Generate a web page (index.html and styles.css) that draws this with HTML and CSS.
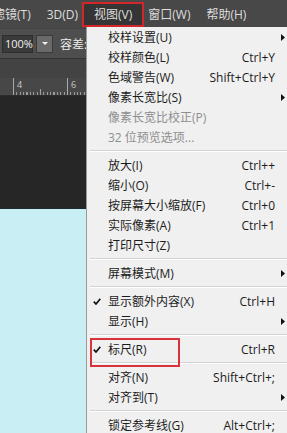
FILE: index.html
```html
<!DOCTYPE html>
<html lang="zh-CN">
<head>
<meta charset="utf-8">
<title>视图菜单</title>
<link rel="stylesheet" href="styles.css">
</head>
<body>
<div class="screen">
  <div class="menubar">
    <span class="mb-item first">滤镜(T)</span>
    <span class="mb-item">3D(D)</span>
    <span class="mb-item active">视图(V)</span>
    <span class="mb-item">窗口(W)</span>
    <span class="mb-item">帮助(H)</span>
  </div>
  <div class="optbar">
    <div class="zoomfield">100%</div>
    <div class="ddbtn"><svg width="6" height="3" viewBox="0 0 6 3"><polygon points="0,0 6,0 3,3" fill="#f2f2f2"/></svg></div>
    <span class="optlabel">容差:</span>
  </div>
  <div class="tabbar"></div>
  <div class="ruler">
    <div class="unit"><span class="lbl">4</span><span class="half"></span></div>
    <div class="unit"><span class="lbl">6</span><span class="half"></span></div>
  </div>
  <div class="darkcanvas"></div>
  <div class="cyancanvas"></div>

  <div class="dropdown">
    <div class="item"><span class="chk"></span><span class="lab">校样设置(U)</span><span class="sc"></span><span class="arr"><svg width="4" height="7" viewBox="0 0 4 7"><polygon points="0,0 4,3.5 0,7" fill="#111"/></svg></span></div>
    <div class="item"><span class="chk"></span><span class="lab">校样颜色(L)</span><span class="sc">Ctrl+Y</span><span class="arr"></span></div>
    <div class="item"><span class="chk"></span><span class="lab">色域警告(W)</span><span class="sc">Shift+Ctrl+Y</span><span class="arr"></span></div>
    <div class="item"><span class="chk"></span><span class="lab">像素长宽比(S)</span><span class="sc"></span><span class="arr"><svg width="4" height="7" viewBox="0 0 4 7"><polygon points="0,0 4,3.5 0,7" fill="#111"/></svg></span></div>
    <div class="item disabled"><span class="chk"></span><span class="lab">像素长宽比校正(P)</span><span class="sc"></span><span class="arr"></span></div>
    <div class="item disabled"><span class="chk"></span><span class="lab">32 位预览选项...</span><span class="sc"></span><span class="arr"></span></div>
    <div class="sep"></div>
    <div class="item"><span class="chk"></span><span class="lab">放大(I)</span><span class="sc">Ctrl++</span><span class="arr"></span></div>
    <div class="item"><span class="chk"></span><span class="lab">缩小(O)</span><span class="sc">Ctrl+-</span><span class="arr"></span></div>
    <div class="item"><span class="chk"></span><span class="lab">按屏幕大小缩放(F)</span><span class="sc">Ctrl+0</span><span class="arr"></span></div>
    <div class="item"><span class="chk"></span><span class="lab">实际像素(A)</span><span class="sc">Ctrl+1</span><span class="arr"></span></div>
    <div class="item"><span class="chk"></span><span class="lab">打印尺寸(Z)</span><span class="sc"></span><span class="arr"></span></div>
    <div class="sep"></div>
    <div class="item"><span class="chk"></span><span class="lab">屏幕模式(M)</span><span class="sc"></span><span class="arr"><svg width="4" height="7" viewBox="0 0 4 7"><polygon points="0,0 4,3.5 0,7" fill="#111"/></svg></span></div>
    <div class="sep"></div>
    <div class="item"><span class="chk"><svg width="8" height="7" viewBox="0 0 8 7"><path d="M0.8 3.6 L3 6 L7.3 0.8" fill="none" stroke="#111" stroke-width="1.7"/></svg></span><span class="lab">显示额外内容(X)</span><span class="sc">Ctrl+H</span><span class="arr"></span></div>
    <div class="item"><span class="chk"></span><span class="lab">显示(H)</span><span class="sc"></span><span class="arr"><svg width="4" height="7" viewBox="0 0 4 7"><polygon points="0,0 4,3.5 0,7" fill="#111"/></svg></span></div>
    <div class="sep"></div>
    <div class="item marked"><span class="chk"><svg width="8" height="7" viewBox="0 0 8 7"><path d="M0.8 3.6 L3 6 L7.3 0.8" fill="none" stroke="#111" stroke-width="1.7"/></svg></span><span class="lab">标尺(R)</span><span class="sc">Ctrl+R</span><span class="arr"></span></div>
    <div class="sep"></div>
    <div class="item"><span class="chk"></span><span class="lab">对齐(N)</span><span class="sc">Shift+Ctrl+;</span><span class="arr"></span></div>
    <div class="item"><span class="chk"></span><span class="lab">对齐到(T)</span><span class="sc"></span><span class="arr"><svg width="4" height="7" viewBox="0 0 4 7"><polygon points="0,0 4,3.5 0,7" fill="#111"/></svg></span></div>
    <div class="sep"></div>
    <div class="item"><span class="chk"></span><span class="lab">锁定参考线(G)</span><span class="sc">Alt+Ctrl+;</span><span class="arr"></span></div>
  </div>
</div>
</body>
</html>
```

FILE: styles.css
```css
* { box-sizing: border-box; }
html, body { margin: 0; padding: 0; }
body {
  font-family: "Open Sans", "Noto Sans CJK SC", sans-serif;
  font-size: 12px;
  background: #262626;
}
.screen {
  position: relative;
  width: 287px;
  height: 433px;
  overflow: hidden;
  display: flex;
  flex-direction: column;
}
.menubar {
  height: 28px;
  flex: none;
  background: #484848;
  display: flex;
  align-items: center;
  color: #dedede;
  white-space: nowrap;
}
.mb-item {
  height: 17px;
  line-height: 17px;
  padding: 0 8px;
  flex: none;
}
.mb-item.first { margin-left: -15px; }
.mb-item.active {
  background: #353535;
  outline: 2px solid #d3262b;
  outline-offset: 2px;
  box-shadow: 0 0 0 2px #353535;
}
.optbar {
  height: 31px;
  flex: none;
  background: #4e4e4e;
  border-top: 1px solid #434343;
  border-bottom: 1px solid #333;
  display: flex;
  align-items: center;
  padding-left: 2px;
  white-space: nowrap;
}
.zoomfield {
  width: 31px;
  height: 18px;
  background: #3a3a3a;
  border: 1px solid #2e2e2e;
  color: #f0f0f0;
  font-size: 11px;
  line-height: 16px;
  padding-left: 2px;
}
.ddbtn {
  width: 17px;
  height: 18px;
  margin-left: 3px;
  background: #6a6a6a;
  border: 1px solid #3a3a3a;
  display: flex;
  align-items: center;
  justify-content: center;
}
.optlabel {
  margin-left: 7px;
  color: #ececec;
}
.tabbar {
  height: 19px;
  flex: none;
  background: #434343;
}
.ruler {
  height: 18px;
  flex: none;
  background-color: #474747;
  background-image: repeating-linear-gradient(90deg, #9a9a9a 0 1px, transparent 1px 3.375px);
  background-size: 100% 3px;
  background-position: 13px 100%;
  background-repeat: no-repeat;
  display: flex;
  padding-left: 13px;
  border-bottom: 1px solid #2c2c2c;
}
.unit {
  width: 54px;
  flex: none;
  border-left: 1px solid #a8a8a8;
  color: #c8c8c8;
  font-size: 9px;
  line-height: 12px;
  padding-left: 3px;
  padding-top: 1px;
  display: flex;
}
.half {
  margin-left: auto;
  margin-right: 26px;
  align-self: flex-end;
  width: 1px;
  height: 6px;
  background: #a0a0a0;
}
.darkcanvas {
  height: 113px;
  flex: none;
  background: #262626;
  border-bottom: 1px solid #1c2a30;
}
.cyancanvas {
  flex: 1;
  background: #c9eff4;
}

/* dropdown menu */
.dropdown {
  position: absolute;
  left: 86px;
  top: 27px;
  width: 212px;
  height: 420px;
  background: #f0f0f0;
  border-left: 1px solid #9a9a9a;
  color: #1c1c1c;
  white-space: nowrap;
}
.item {
  position: relative;
  height: 20px;
  display: flex;
  align-items: center;
}
.item.disabled { color: #8e8e8e; }
.chk {
  width: 21px;
  flex: none;
  display: flex;
  align-items: center;
  padding-left: 6px;
}
.lab { flex: 1; }
.sc { flex: none; }
.arr {
  width: 23px;
  flex: none;
  display: flex;
  align-items: center;
  padding-left: 6px;
}
.sep {
  height: 8px;
  margin-left: 3px;
  border-top: 3px solid transparent;
  background: linear-gradient(#d2d2d2 0 1px, #ffffff 1px 2px, transparent 2px);
}
.item.marked::after {
  content: "";
  position: absolute;
  left: 3px;
  top: -1px;
  width: 86px;
  height: 25px;
  border: 2px solid #d8333a;
}
```
